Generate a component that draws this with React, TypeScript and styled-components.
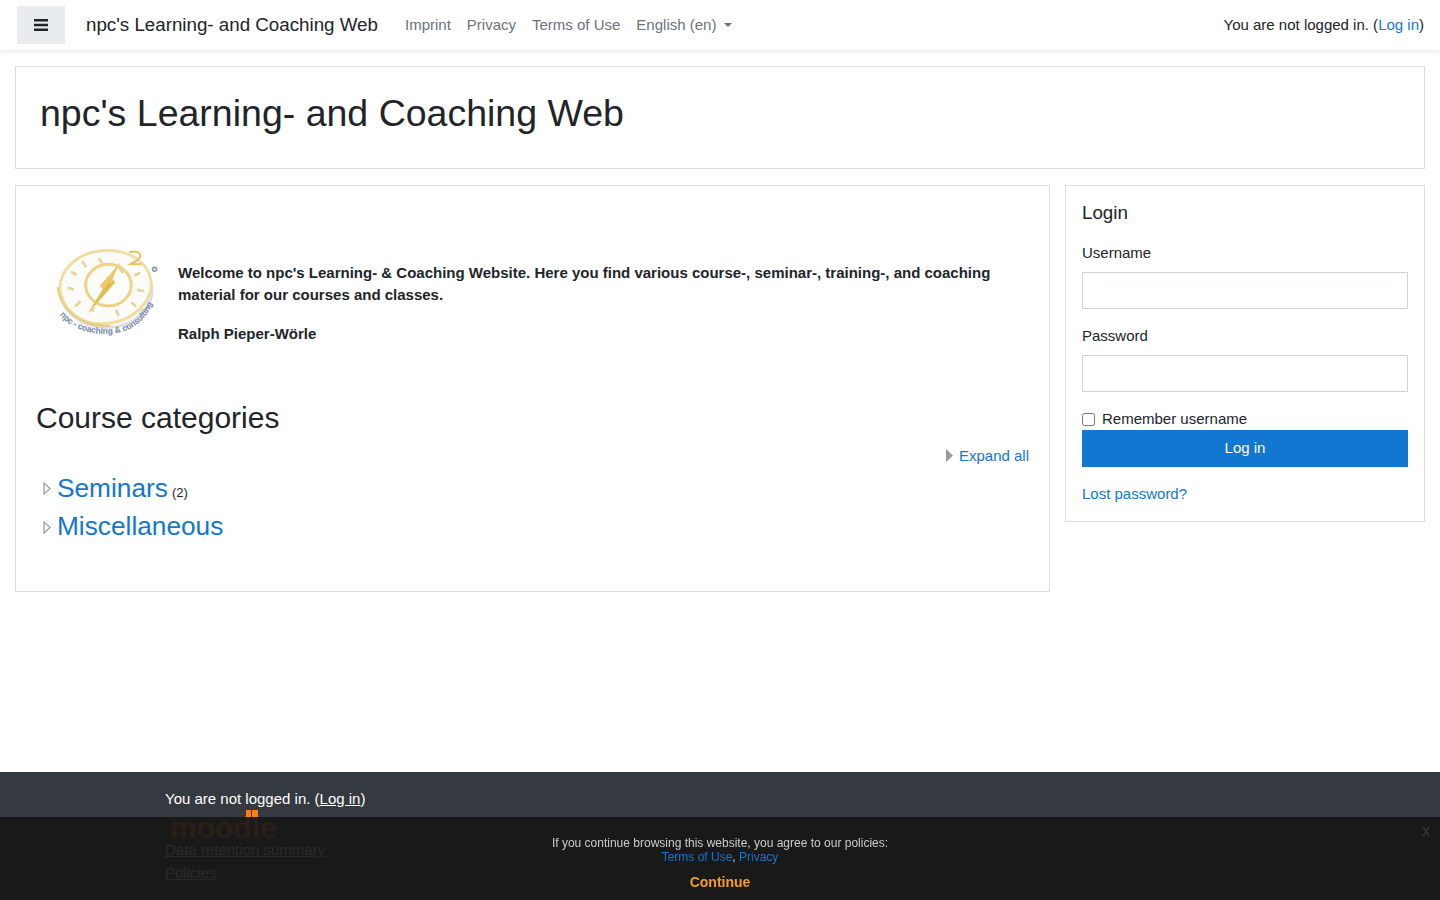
import React from 'react';
import styled, { createGlobalStyle } from 'styled-components';

const GlobalStyle = createGlobalStyle`
    html, body {
        margin: 0;
        padding: 0;
    }
    body {
        font-family: "Liberation Sans", Arial, sans-serif;
        font-size: 15px;
        line-height: 22.5px;
        color: #212529;
        background: #fff;
    }
    * {
        box-sizing: border-box;
    }
`

const Page = styled.div`
    min-height: 100vh;
    display: flex;
    flex-direction: column;
`

const Navbar = styled.nav`
    height: 50px;
    display: flex;
    align-items: center;
    padding: 0 16px;
    background: #fff;
    box-shadow: 0 2px 4px rgba(0, 0, 0, .08);
`

const Toggle = styled.button`
    width: 48px;
    height: 38px;
    margin-left: 1px;
    border: 0;
    padding: 0;
    background: #e9ecef;
    color: #212529;
    display: flex;
    align-items: center;
    justify-content: center;
`

const Brand = styled.a`
    margin: 0 19px 0 21px;
    font-size: 18.75px;
    color: #212529;
`

const NavLink = styled.a`
    padding: 0 8px;
    color: #6a737b;
    display: flex;
    align-items: center;
`

const Caret = styled.span`
    margin-left: 8px;
    border-top: 4.5px solid #6a737b;
    border-left: 4.5px solid transparent;
    border-right: 4.5px solid transparent;
`

const UserInfo = styled.div`
    margin-left: auto;
`

const Link = styled.a`
    color: #1177d1;
`

const Wrapper = styled.div`
    padding: 16px 15px 0;
`

const Card = styled.section`
    border: 1px solid #dcdfe2;
    background: #fff;
`

const PageHeader = styled(Card)`
    padding: 24px 24px 32px;
    margin-bottom: 16px;
`

const PageTitle = styled.h1`
    margin: 0;
    font-size: 37.5px;
    line-height: 45px;
    font-weight: 400;
`

const Columns = styled.div`
    display: grid;
    grid-template-columns: 1035px 360px;
    gap: 15px;
    align-items: start;
`

const MainCard = styled(Card)`
    height: 407px;
    padding: 20px;
`

const Intro = styled.div`
    display: flex;
    align-items: flex-start;
    padding: 39px 0 0 14px;
`

const LogoBox = styled.div`
    width: 110px;
    height: 95px;
    margin-right: 18px;
    flex: none;
`

const IntroText = styled.div`
    margin-top: 16.5px;
    font-weight: 700;

    p {
        margin: 0 0 16px;
    }
    p:last-child {
        margin-bottom: 0;
    }
`

const SectionTitle = styled.h2`
    margin: 54.5px 0 0;
    font-size: 30px;
    line-height: 36px;
    font-weight: 400;
`

const ExpandRow = styled.div`
    display: flex;
    justify-content: flex-end;
    align-items: center;
    gap: 6px;
    margin-top: 9px;
`

const CategoryRow = styled.div`
    display: flex;
    align-items: baseline;
    height: 38px;
    margin-left: 7px;
`

const FirstRow = styled(CategoryRow)`
    margin-top: 2px;
`

const CategoryArrow = styled.svg<{ $drop: number }>`
    width: 8px;
    height: 13px;
    margin-right: 6px;
    margin-top: ${props => props.$drop}px;
    align-self: center;
    flex: none;
`

const CategoryLink = styled.a`
    font-size: 26.25px;
    line-height: 38px;
    color: #1177d1;
`

const Count = styled.span`
    margin-left: 4px;
    font-size: 13px;
`

const LoginCard = styled(Card)`
    height: 337px;
    padding: 16px;
`

const LoginTitle = styled.h5`
    margin: 0;
    padding-bottom: 1.5px;
    font-size: 18.75px;
    line-height: 22.5px;
    font-weight: 400;
`

const Field = styled.div`
    margin-top: 16px;
    display: flex;
    flex-direction: column;
    gap: 8px;
`

const Label = styled.label`
    display: block;
    line-height: 22px;
`

const Input = styled.input`
    width: 100%;
    height: 37px;
    border: 1px solid #ced4da;
    background: #fff;
`

const Remember = styled.label`
    display: flex;
    align-items: center;
    height: 22px;
    margin-top: 16px;
`

const Check = styled.input`
    width: 13px;
    height: 13px;
    margin: 0 7px 0 0;
`

const LoginButton = styled.button`
    display: block;
    width: 100%;
    height: 37px;
    border: 0;
    background: #1177d1;
    color: #fff;
    font: inherit;
`

const LostPassword = styled.div`
    margin-top: 16px;
`

const Footer = styled.footer`
    margin-top: auto;
    height: 128px;
    padding: 16px 165px 0;
    background: #343a40;
    color: #fff;

    a {
        color: #fff;
        text-decoration: underline;
    }
`

const FooterLine = styled.div`
    height: 23.5px;
`

const MoodleLogo = styled.div`
    position: relative;
    height: 27px;
    padding-left: 5px;
    color: #f98012;
    font-size: 30px;
    line-height: 32px;
    font-weight: 700;
    width: 120px;
`

const MoodleHat = styled.svg`
    position: absolute;
    left: 81px;
    top: -1.5px;
    width: 12px;
    height: 8px;
`

const PolicyBanner = styled.div`
    position: fixed;
    left: 0;
    right: 0;
    bottom: 0;
    height: 83px;
    padding-top: 19px;
    background: rgba(23, 23, 23, .92);
    text-align: center;
    font-size: 12px;
    line-height: 14px;
    color: #ccc;
`

const BannerLink = styled.a`
    color: #1177d1;
`

const ContinueLink = styled.a`
    display: block;
    margin-top: 10px;
    font-size: 14px;
    line-height: 16px;
    font-weight: 700;
    color: #f0a01c;
`

const CloseMark = styled.span`
    position: absolute;
    top: 5px;
    right: 10px;
    font-size: 16px;
    line-height: 18px;
    color: #3a3a3a;
`

const CompassLogo = () => (
    <svg width="110" height="95" viewBox="-3 0 111 95" style={{ filter: 'blur(0.45px)' }}>
        <defs>
            <path id="logoArc" d="M7 70 C20 88 56 95 78 84 C90 77 98 68 103 52" />
        </defs>
        <ellipse cx="54" cy="46" rx="46" ry="37" fill="#f4f4f2" stroke="#dcdcdc" strokeWidth="2.500" />
        <path d="M8 50 C3 28 22 7 52 5 C76 4 96 16 99 36 C101 56 82 77 52 79 C32 80 14 70 8 50Z" fill="#fbfbf9" stroke="#f2dc9c" strokeWidth="2.800" />
        <path d="M5 42 C6 62 26 83 58 81" fill="none" stroke="#e9ca78" strokeWidth="1.800" />
        <ellipse cx="56" cy="40" rx="23" ry="21" fill="#fdfdfc" stroke="#efd383" strokeWidth="3" />
        <polygon points="68,17 60,34 63,37 35,69 50,44 47,41" fill="#eccb6c" />
        <polygon points="68,17 56,38 63,37 35,69 54,40" fill="#e3bb50" />
        <path d="M77 7 C86 4 90 9 87 13 C85 16 81 17 78 19 L89 19" fill="none" stroke="#e6c25f" strokeWidth="2" />
        <circle cx="102.500" cy="24" r="2.800" fill="#8595ae" />
        <circle cx="102.500" cy="24" r="1.200" fill="#e6e9ee" />
        <g stroke="#e6d498" strokeWidth="2.800" strokeLinecap="round">
            <path d="M30 17 L33 21" />
            <path d="M47 14 L49 17" />
            <path d="M23 29 L19 27" />
            <path d="M20 44 L16 43" />
            <path d="M27 57 L23 61" />
            <path d="M40 62 L40 66" />
            <path d="M64 66 L66 70" />
            <path d="M83 30 L87 28" />
            <path d="M86 45 L91 46" />
            <path d="M80 58 L83 61" />
            <path d="M66 20 L70 27" />
        </g>
        <text fontFamily="Liberation Sans, sans-serif" fontSize="8.500" fontWeight="700" fill="#7d8fae" stroke="#7d8fae" strokeWidth="0.2">
            <textPath href="#logoArc" textLength="112" lengthAdjust="spacingAndGlyphs">npc - coaching &amp; consulting</textPath>
        </text>
    </svg>
);

const OutlineArrow = ({ drop }: { drop: number }) => (
    <CategoryArrow $drop={drop} viewBox="0 0 8 13">
        <path d="M1 1 L7 6.500 L1 12Z" fill="#fff" stroke="#a5a5a5" strokeWidth="1.400" />
    </CategoryArrow>
);

export default function App() {
    return (
        <Page>
            <GlobalStyle />
            <Navbar>
                <Toggle aria-label="Side panel">
                    <svg width="14" height="12" viewBox="0 0 14 12">
                        <path d="M0 0h14v2.400H0zM0 4.800h14v2.400H0zM0 9.600h14V12H0z" fill="#212529" />
                    </svg>
                </Toggle>
                <Brand>npc's Learning- and Coaching Web</Brand>
                <NavLink>Imprint</NavLink>
                <NavLink>Privacy</NavLink>
                <NavLink>Terms of Use</NavLink>
                <NavLink>English (en)<Caret /></NavLink>
                <UserInfo>You are not logged in. (<Link>Log in</Link>)</UserInfo>
            </Navbar>
            <Wrapper>
                <PageHeader>
                    <PageTitle>npc's Learning- and Coaching Web</PageTitle>
                </PageHeader>
                <Columns>
                    <MainCard>
                        <Intro>
                            <LogoBox><CompassLogo /></LogoBox>
                            <IntroText>
                                <p>Welcome to npc's Learning- &amp; Coaching Website. Here you find various course-, seminar-, training-, and coaching material for our courses and classes.</p>
                                <p>Ralph Pieper-Wörle</p>
                            </IntroText>
                        </Intro>
                        <SectionTitle>Course categories</SectionTitle>
                        <ExpandRow>
                            <svg width="7" height="13" viewBox="0 0 7 13">
                                <path d="M0 0 L7 6.500 L0 13Z" fill="#999" />
                            </svg>
                            <Link>Expand all</Link>
                        </ExpandRow>
                        <FirstRow>
                            <OutlineArrow drop={0} />
                            <CategoryLink>Seminars</CategoryLink>
                            <Count>(2)</Count>
                        </FirstRow>
                        <CategoryRow>
                            <OutlineArrow drop={2} />
                            <CategoryLink>Miscellaneous</CategoryLink>
                        </CategoryRow>
                    </MainCard>
                    <LoginCard>
                        <LoginTitle>Login</LoginTitle>
                        <Field>
                            <Label>Username</Label>
                            <Input type="text" />
                        </Field>
                        <Field>
                            <Label>Password</Label>
                            <Input type="password" />
                        </Field>
                        <Remember>
                            <Check type="checkbox" />
                            Remember username
                        </Remember>
                        <LoginButton>Log in</LoginButton>
                        <LostPassword><Link>Lost password?</Link></LostPassword>
                    </LoginCard>
                </Columns>
            </Wrapper>
            <Footer>
                <FooterLine>You are not logged in. (<a>Log in</a>)</FooterLine>
                <MoodleLogo>
                    <MoodleHat viewBox="0 0 12 8">
                        <path d="M0 0h5v8H0zM6 0h6v8H6z" fill="#f98012" />
                    </MoodleHat>
                    moodle
                </MoodleLogo>
                <FooterLine><a>Data retention summary</a></FooterLine>
                <FooterLine><a>Policies</a></FooterLine>
            </Footer>
            <PolicyBanner>
                If you continue browsing this website, you agree to our policies:
                <br />
                <BannerLink>Terms of Use</BannerLink>, <BannerLink>Privacy</BannerLink>
                <ContinueLink>Continue</ContinueLink>
                <CloseMark>x</CloseMark>
            </PolicyBanner>
        </Page>
    );
}
